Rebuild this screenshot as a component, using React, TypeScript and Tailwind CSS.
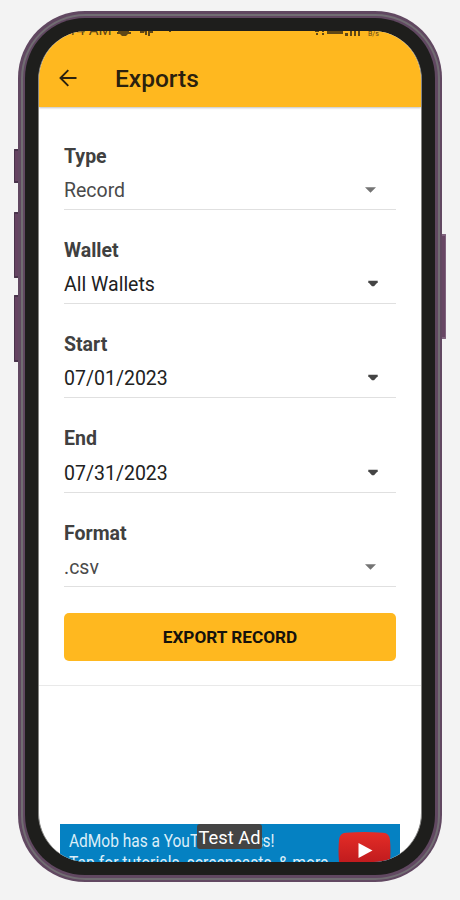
import React from "react";

type Field = { label: string; value: string; soft: boolean };

const fields: Field[] = [
  { label: "Type", value: "Record", soft: true },
  { label: "Wallet", value: "All Wallets", soft: false },
  { label: "Start", value: "07/01/2023", soft: false },
  { label: "End", value: "07/31/2023", soft: false },
  { label: "Format", value: ".csv", soft: true },
];

function SelectField({ label, value, soft }: Field) {
  return (
    <div className="h-[94.25px]">
      <div className="h-[23px] text-[19.5px] leading-[23px] font-bold text-[#404040]">
        <span className="inline-block">{label}</span>
      </div>
      <div className="mt-[6px] flex h-[36.300px] items-start justify-between border-b border-[#e0e0e0] pt-[5.200px]">
        <span
          className={
            soft
              ? "text-[19.5px] leading-[24px] text-[#4a4a4a]"
              : "text-[19.5px] leading-[24px] text-[#212121]"
          }
        >
          {value}
        </span>
        {soft ? (
          <svg className="mt-[8px] mr-[20px] h-[6px] w-[11px]" viewBox="0 0 11 6">
            <path d="M0 .3h11L5.5 5.7z" fill="#747474" />
          </svg>
        ) : (
          <svg className="mt-[7px] mr-[18.500px] h-[7px] w-[10px]" viewBox="0 0 10 7">
            <path d="M.3.7h9.4v1.5L6 6.3H4L.3 2.2z" fill="#444" />
          </svg>
        )}
      </div>
    </div>
  );
}

function StatusBar() {
  return (
    <div className="flex h-[6px] items-start justify-between overflow-hidden pr-[30px] pl-[17px] text-[#5f4716]">
      <div className="flex items-start">
        <span className="mt-[-9px] text-[15px] leading-[16px]">9:14 AM</span>
        <svg className="ml-[5px] h-[6px] w-[60px]" viewBox="0 0 60 6" fill="#5f4716">
          <path d="M1 0h11v1H1zM0 1h14v2H0zM3 3h8L9 5H5z" />
          <path d="M23 0h4v2h-4zM27 0h3v4h-2v-2zM31 0h5v2h-3v3h-2V2zM52 0h2v1h-2z" />
        </svg>
      </div>
      <svg className="h-[6px] w-[76px]" viewBox="0 0 76 6" fill="#5f4716">
        <path d="M0 0h4v1H0zM1 2h2v2H1zM7 0h2v1H7zM7 2h2v2H7zM12 0h16v3H12zM30 2h3v3h-3zM35 0h2v5h-2zM39 0h2v5h-2zM43 0h2v5h-2zM71 0h5v3z" />
        <text x="53" y="5" fontSize="7" fontFamily="Roboto">B/s</text>
      </svg>
    </div>
  );
}

function AdBanner() {
  return (
    <div className="relative mx-auto h-[38px] w-[340px] overflow-hidden bg-[#0581c2] text-[18px] leading-[22px] whitespace-nowrap text-[#dceef8]">
      <div className="flex h-[22px] origin-left translate-x-[9px] translate-y-[6px] scale-x-[0.86]">
        <span className="w-[225px] shrink-0 overflow-hidden">AdMob has a YouTube video</span>
        <span>s!</span>
      </div>
      <div className="h-[22px] origin-left translate-x-[9px] translate-y-[6px] scale-x-[0.872]">
        Tap for tutorials, screencasts, &amp; more
      </div>
      <div className="absolute top-0 left-[137px] h-[25px] w-[65px] rounded-[3px] bg-[#444] text-center text-[18.300px] leading-[28px] text-white">
        Test Ad
      </div>
      <svg className="absolute top-[8px] left-[278px] h-[38px] w-[53px]" viewBox="0 0 53 38">
        <defs>
          <linearGradient id="play" x1="0" y1="0" x2="0" y2="1">
            <stop offset="0" stopColor="#e52d27" />
            <stop offset="1" stopColor="#b8171c" />
          </linearGradient>
        </defs>
        <path d="M1 8Q1.500 1 8 .7Q26-.7 45 .7Q51.500 1 52 8Q53 19 52 29Q51.500 36 45 37Q26 38 8 37Q1.500 36 1 29Q0 19 1 8z" fill="url(#play)" />
        <path d="M20.500 11L34.500 18.500L20.500 26z" fill="#fff" />
      </svg>
    </div>
  );
}

export default function App() {
  return (
    <div className="h-[900px] w-[460px] overflow-hidden bg-[#f3f3f3] pt-[11px] pl-[18px] font-['Roboto','Liberation_Sans',sans-serif]">
      <div className="relative h-[871px] w-[424px]">
        <div className="absolute top-[138px] left-[-4px] h-[34px] w-[5px] rounded-l-[1px] border-y-2 border-l border-[#49334b] bg-[#654361]" />
        <div className="absolute top-[201px] left-[-4px] h-[66px] w-[5px] rounded-l-[1px] border-y-2 border-l border-[#49334b] bg-[#654361]" />
        <div className="absolute top-[284px] left-[-4px] h-[67px] w-[5px] rounded-l-[1px] border-y-2 border-l border-[#49334b] bg-[#654361]" />
        <div className="absolute top-[223px] right-[-4px] h-[105px] w-[5px] rounded-r-[1px] border-y-2 border-r border-[#80637e] bg-[#684664]" />
        <div className="relative h-full rounded-[67px] bg-[#614861] p-[2.500px]">
          <div className="h-full rounded-[64.500px] bg-[#716d72] p-[2px]">
            <div className="h-full rounded-[62.500px] bg-[#614861] p-[2.500px]">
              <div className="h-full rounded-[60px] bg-[#1e1e1c] px-[13px] pt-[13px] pb-[13px]">
                <div className="flex h-[831px] w-[384px] flex-col overflow-hidden rounded-[49px] border-x border-[#858583] bg-white">
                  <header className="h-[76px] shrink-0 bg-[#ffb81f] shadow-[0_1px_2px_rgba(0,0,0,0.25)]">
                    <StatusBar />
                    <div className="flex h-[70px] items-start pt-[26px] pl-[20px]">
                      <svg className="mt-[6px] h-[18px] w-[18px]" viewBox="0 0 18 18" fill="none" stroke="#2b210e" strokeWidth="1.900">
                        <path d="M17.500 9H1.500M9.300 1.200L1.500 9l7.800 7.800" />
                      </svg>
                      <h1 className="ml-[38px] text-[24.500px] leading-[32px] font-medium text-[#2b210e]">Exports</h1>
                    </div>
                  </header>
                  <main className="flex h-[579px] shrink-0 flex-col border-b-[1.500px] border-[#e9e9e9] px-[25px] pt-[37.700px]">
                    {fields.map((f) => (
                      <SelectField key={f.label} {...f} />
                    ))}
                    <button className="mt-[-2.700px] h-[48px] w-full shrink-0 rounded-[5px] bg-[#ffb81f] pt-[2px] text-[17.200px] font-bold text-[#15120c]">
                      EXPORT RECORD
                    </button>
                  </main>
                  <div className="mt-[138px] shrink-0">
                    <AdBanner />
                  </div>
                </div>
              </div>
            </div>
          </div>
        </div>
      </div>
    </div>
  );
}
